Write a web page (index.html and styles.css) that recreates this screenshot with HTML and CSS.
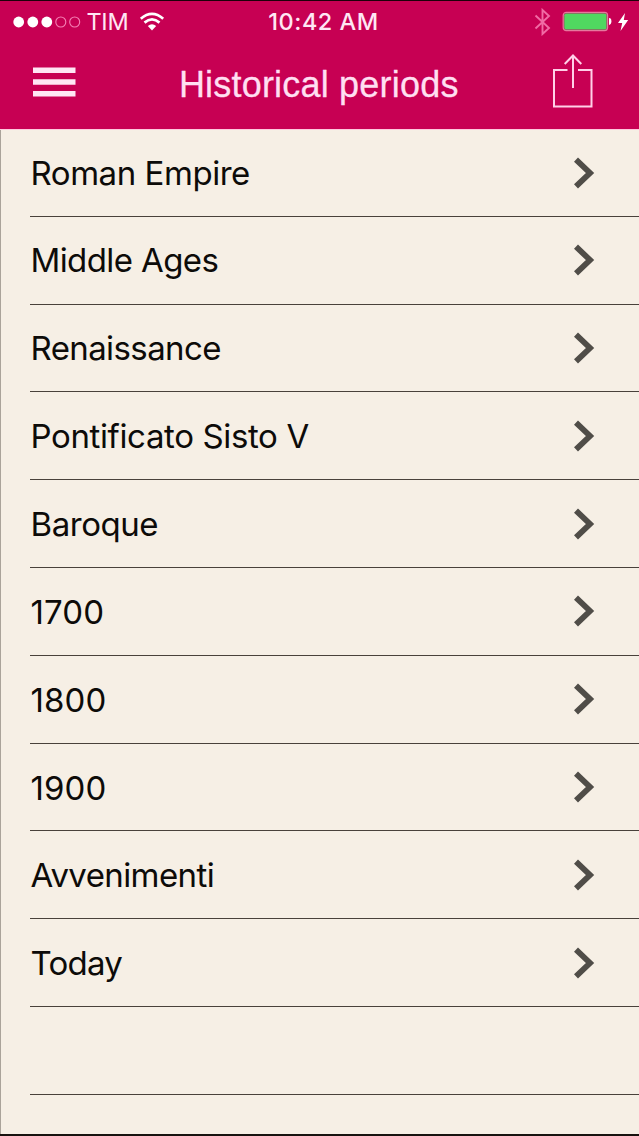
FILE: index.html
```html
<!DOCTYPE html>
<html lang="en">
<head>
<meta charset="utf-8">
<title>Historical periods</title>
<link rel="stylesheet" href="styles.css">
</head>
<body>
<div class="screen">
  <header class="header">
    <div class="status">
      <div class="status-left">
        <svg class="signal" width="68" height="12" viewBox="0 0 68 12">
          <g fill="#fff"><circle cx="5.7" cy="6" r="5.4"/><circle cx="19.8" cy="6" r="5.4"/><circle cx="33.8" cy="6" r="5.4"/></g>
          <g fill="none" stroke="#f581b5" stroke-width="1.1"><circle cx="47.8" cy="6" r="5"/><circle cx="61.7" cy="6" r="5"/></g>
        </svg>
        <span class="carrier">TIM</span>
        <svg class="wifi" width="26" height="20" viewBox="0 0 26 20">
          <g fill="none" stroke="#fff" stroke-width="2.7"><path d="M1.8 6.8Q13 -2.9 24.2 6.8"/><path d="M5.5 10.6Q13 4.3 20.5 10.6"/></g>
          <path d="M8.8 14.1Q13 10.6 17.2 14.1L13 18.6Z" fill="#fff"/>
        </svg>
      </div>
      <div class="time">10:42 AM</div>
      <div class="status-right">
        <svg width="17" height="28" viewBox="0 0 17 28" fill="none" stroke="#f16ba5" stroke-width="1.9"><path d="M1.5 7.5L15 20L8.5 26V2L15 8L1.5 20.5"/></svg>
        <svg class="battery" width="50" height="21" viewBox="0 0 50 21"><rect x="1.2" y="1.4" width="44.4" height="18.2" rx="3" fill="#b02060" stroke="#e5799e" stroke-width="1.2"/><rect x="2.3" y="2.5" width="42.2" height="16" rx="1.8" fill="#50d860"/><path d="M47 7Q49.4 7 49.4 10.3T47 14Z" fill="#fff"/></svg>
        <svg class="bolt" width="12" height="20" viewBox="0 0 12 20"><path d="M8 1L1 11H5.2L3.5 19L11.2 8H6.8Z" fill="#fff"/></svg>
      </div>
    </div>
    <nav class="nav">
      <svg class="menu" width="43" height="30" viewBox="0 0 43 30" fill="#ffe6f4"><path d="M0 .5H42.5V6H0ZM0 12.2H42.5V17.7H0ZM0 24H42.5V29.5H0Z"/></svg>
      <h1 class="title">Historical periods</h1>
      <svg class="share" width="42" height="56" viewBox="0 0 42 56" fill="none" stroke="#ffd0e8" stroke-width="2"><path d="M15.5 16H2V52.5H39.5V16H26M21 34V1.5M12.7 10L21 1.5L29.3 10"/></svg>
    </nav>
  </header>
  <ul class="list">
    <li class="row"><span class="roman">Roman Empire</span><svg class="chev" viewBox="0 0 22 32"><path d="M3 2.7L17 16L3 29.3"/></svg></li>
    <li class="row"><span class="tight">Middle Ages</span><svg class="chev" viewBox="0 0 22 32"><path d="M3 2.7L17 16L3 29.3"/></svg></li>
    <li class="row"><span class="tight">Renaissance</span><svg class="chev" viewBox="0 0 22 32"><path d="M3 2.7L17 16L3 29.3"/></svg></li>
    <li class="row"><span class="sisto">Pontificato Sisto V</span><svg class="chev" viewBox="0 0 22 32"><path d="M3 2.7L17 16L3 29.3"/></svg></li>
    <li class="row"><span class="roman">Baroque</span><svg class="chev" viewBox="0 0 22 32"><path d="M3 2.7L17 16L3 29.3"/></svg></li>
    <li class="row"><span class="year">1700</span><svg class="chev" viewBox="0 0 22 32"><path d="M3 2.7L17 16L3 29.3"/></svg></li>
    <li class="row"><span class="year">1800</span><svg class="chev" viewBox="0 0 22 32"><path d="M3 2.7L17 16L3 29.3"/></svg></li>
    <li class="row"><span class="year">1900</span><svg class="chev" viewBox="0 0 22 32"><path d="M3 2.7L17 16L3 29.3"/></svg></li>
    <li class="row"><span class="tight">Avvenimenti</span><svg class="chev" viewBox="0 0 22 32"><path d="M3 2.7L17 16L3 29.3"/></svg></li>
    <li class="row"><span class="today">Today</span><svg class="chev" viewBox="0 0 22 32"><path d="M3 2.7L17 16L3 29.3"/></svg></li>
    <li class="row"></li>
  </ul>
</div>
</body>
</html>
```
FILE: styles.css
```css
* { box-sizing: border-box; }
body { margin: 0; }
svg { display: block; flex: none; }
.screen {
  width: 639px;
  height: 1136px;
  overflow: hidden;
  background: #f6efe5;
  border-bottom: 2px solid #17120f;
  font-family: Inter, "Liberation Sans", sans-serif;
}
.header {
  height: 130px;
  background: #c70053;
  border-top: 1px solid #1d0009;
  border-bottom: 1px solid #ffc9dd;
}
.status {
  display: grid;
  grid-template-columns: 200px 1fr 200px;
  align-items: center;
  height: 41px;
}
.status-left { display: flex; align-items: center; padding-left: 13px; }
.carrier { width: 42px; margin-left: 5.5px; color: #ffe6f4; font-size: 23.5px; line-height: 28px; letter-spacing: -.3px; white-space: nowrap; }
.wifi { margin-left: 10.5px; }
.time { text-align: center; color: #ffe6f4; font-size: 23.5px; font-weight: 500; line-height: 28px; letter-spacing: .5px; padding-left: 8px; }
.status-right { display: flex; align-items: center; justify-content: flex-end; padding-right: 10px; }
.battery { margin-left: 11px; }
.bolt { margin-left: 5px; }
.nav {
  display: flex;
  align-items: center;
  justify-content: space-between;
  height: 87px;
  padding: 0 45px 7px 32.5px;
}
.title { margin: 0; padding: 5px 0 0 10px; color: #ffdff1; font: 400 36px/40px "Liberation Sans", Arial, sans-serif; letter-spacing: .2px; white-space: nowrap; -webkit-text-stroke: .3px #ffdff1; }
.list { height: 1004px; margin: 0; padding: 0 0 0 29px; list-style: none; border-left: 1px solid #aaa39a; }
.row {
  display: flex;
  align-items: center;
  justify-content: space-between;
  height: 87.82px;
  padding: 0 44px 0 .5px;
  border-bottom: 1px solid #49413b;
  color: #0d0b09;
  font-size: 33px;
  line-height: 40px;
  white-space: nowrap;
}
.row:first-child { height: 86.8px; }
.roman { letter-spacing: -.45px; }
.tight { letter-spacing: -.6px; }
.sisto { letter-spacing: -.37px; }
.today { letter-spacing: -.75px; }
.year { padding-top: 1px; letter-spacing: .1px; }
.chev { width: 22px; height: 32px; fill: none; stroke: #504d48; stroke-width: 5.8; }
```
